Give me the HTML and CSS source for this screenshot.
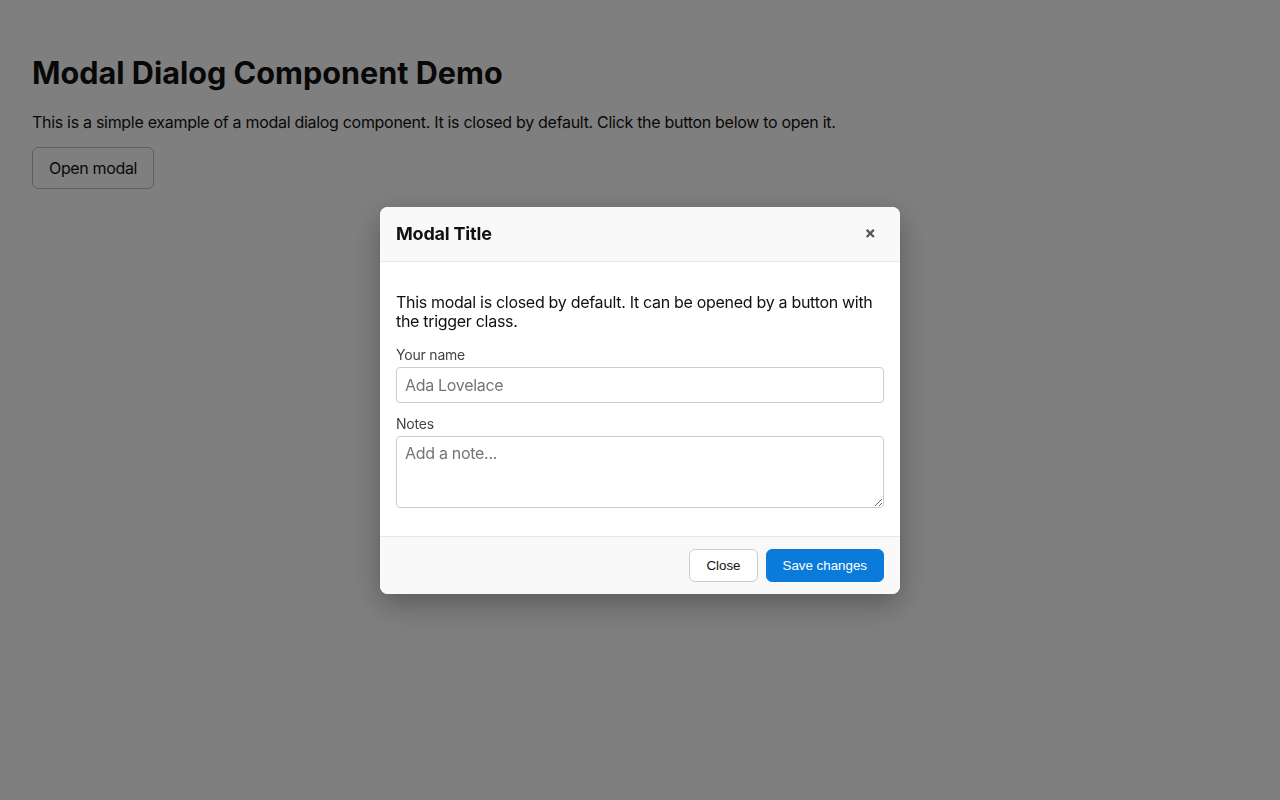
FILE: index.html
```html
<!DOCTYPE html>
<html lang="en">
<head>
<meta charset="utf-8">
<title>Modal Dialog Component Demo</title>
<link rel="stylesheet" href="styles.css">
</head>
<body>
<main class="page">
  <h1 class="title">Modal Dialog Component Demo</h1>
  <p class="intro">This is a simple example of a modal dialog component. It is closed by default. Click the button below to open it.</p>
  <button class="trigger" type="button">Open modal</button>
</main>

<div class="overlay">
  <div class="modal" role="dialog" aria-labelledby="modal-title">
    <header class="modal-header">
      <h2 class="modal-title" id="modal-title">Modal Title</h2>
      <button class="modal-close" type="button" aria-label="Close">×</button>
    </header>
    <div class="modal-body">
      <p class="modal-text">This modal is closed by default. It can be opened by a button with the trigger class.</p>
      <div class="field">
        <label class="field-label" for="name">Your name</label>
        <input class="field-input" id="name" type="text" placeholder="Ada Lovelace">
      </div>
      <div class="field">
        <label class="field-label" for="notes">Notes</label>
        <textarea class="field-input field-textarea" id="notes" placeholder="Add a note..."></textarea>
      </div>
    </div>
    <footer class="modal-footer">
      <button class="btn btn-secondary" type="button">Close</button>
      <button class="btn btn-primary" type="button">Save changes</button>
    </footer>
  </div>
</div>
</body>
</html>
```

FILE: styles.css
```css
* { box-sizing: border-box; }

html, body {
  margin: 0;
  height: 100%;
}

body {
  font-family: Inter, "Noto Sans", "Liberation Sans", sans-serif;
  color: #111;
  background: #fff;
  letter-spacing: -0.3px;
}

.page {
  padding: 32px;
}

.title {
  font-size: 30.6px;
  font-weight: 700;
  margin: 23px 0 21px;
  line-height: 1.2;
  letter-spacing: 0;
}

.intro {
  font-size: 16px;
  margin: 0 0 15px;
  line-height: 19px;
}

.trigger {
  font-family: inherit;
  font-size: 16px;
  letter-spacing: -0.35px;
  color: #111;
  background: #fff;
  border: 1px solid #bbb;
  border-radius: 6px;
  padding: 9px 16px;
  line-height: 22px;
}

.overlay {
  position: fixed;
  inset: 0;
  background: rgba(0, 0, 0, 0.5);
  display: flex;
  align-items: center;
  justify-content: center;
}

.modal {
  width: 520px;
  background: #fff;
  border-radius: 8px;
  overflow: hidden;
  box-shadow: 0 10px 30px rgba(0, 0, 0, 0.3);
}

.modal-header {
  display: flex;
  align-items: center;
  justify-content: space-between;
  height: 55px;
  padding: 0 16px;
  background: #f9f9f9;
  border-bottom: 1px solid #e6e6e6;
}

.modal-title {
  margin: 0;
  font-size: 18px;
  font-weight: 700;
  color: #111;
  letter-spacing: -0.2px;
}

.modal-close {
  font-family: Inter, "Liberation Sans", sans-serif;
  border: 0;
  background: transparent;
  color: #555;
  font-size: 17px;
  font-weight: 700;
  line-height: 1;
  padding: 2px 6px;
  margin-right: 2px;
}

.modal-body {
  padding: 16px 16px 16px;
}

.modal-text {
  font-size: 16px;
  line-height: 19px;
  margin: 15px 0 15px;
}

.field {
  display: flex;
  flex-direction: column;
  margin-bottom: 12px;
}

.field-label {
  font-size: 14px;
  line-height: 17px;
  color: #444;
  margin-bottom: 4px;
  letter-spacing: -0.2px;
}

.field-input {
  font-family: inherit;
  font-size: 16px;
  letter-spacing: -0.3px;
  color: #111;
  height: 36px;
  padding: 7px 8px;
  border: 1px solid #ccc;
  border-radius: 4px;
  background: #fff;
}

.field-input::placeholder {
  color: #757575;
}

.field-textarea {
  height: 72px;
  resize: vertical;
  line-height: 19px;
}

.modal-footer {
  display: flex;
  justify-content: flex-end;
  gap: 8px;
  padding: 12px 16px;
  background: #f9f9f9;
  border-top: 1px solid #e6e6e6;
}

.btn {
  font-family: "Liberation Sans", Arial, sans-serif;
  font-size: 13.333px;
  letter-spacing: 0;
  line-height: 15px;
  padding: 8px 16px;
  border-radius: 6px;
  border: 1px solid #ccc;
}

.btn-secondary {
  background: #fff;
  color: #111;
}

.btn-primary {
  background: #0b7bdb;
  border-color: #0b7bdb;
  color: #fff;
}
```
